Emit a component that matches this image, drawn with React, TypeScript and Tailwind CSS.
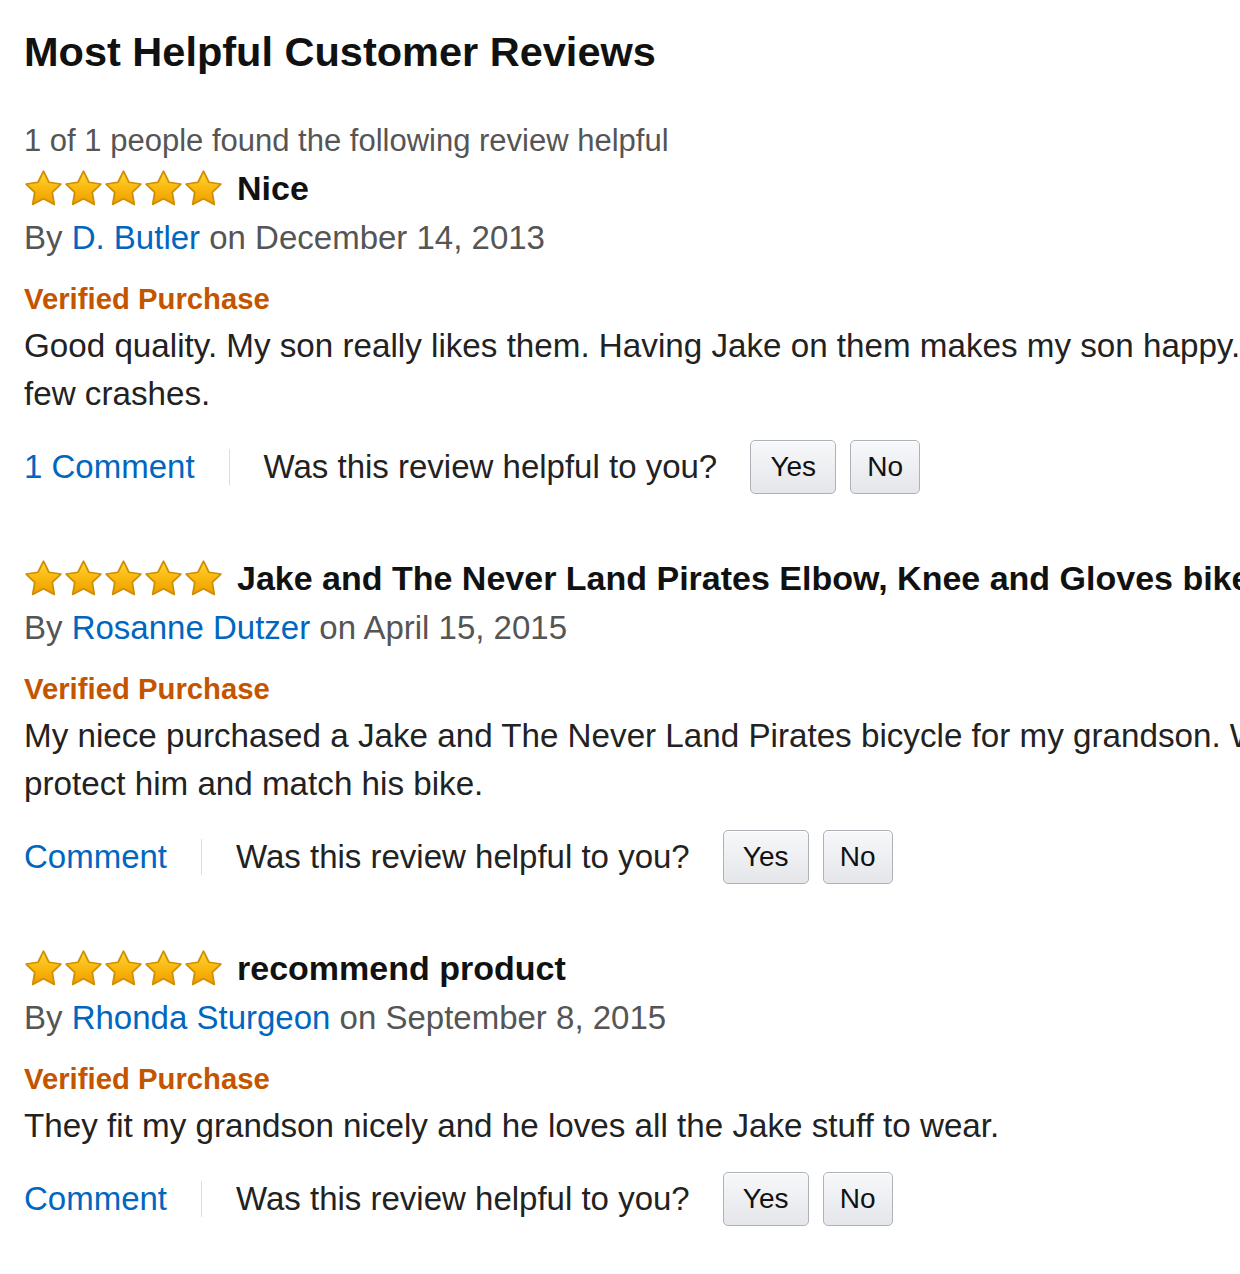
import React from "react";

const Star = ({ id }: { id: string }) => (
  <svg width="39" height="38" viewBox="0 0 40 38" className="shrink-0">
    <defs>
      <linearGradient id={id} x1="0" y1="0" x2="0" y2="1">
        <stop offset="0" stopColor="#ffd43c" />
        <stop offset="0.55" stopColor="#f9b60d" />
        <stop offset="1" stopColor="#ee9d00" />
      </linearGradient>
    </defs>
    <path
      d="M20 1.8 L25.6 13.1 L37.8 14.9 L29 23.6 L31.1 35.8 L20 30 L8.9 35.8 L11 23.6 L2.2 14.9 L14.4 13.1 Z"
      fill={`url(#${id})`}
      stroke="#cf8f00"
      strokeWidth="1.8"
      strokeLinejoin="round"
    />
  </svg>
);

const Stars = ({ k }: { k: string }) => (
  <div className="flex gap-[1px]">
    {[0, 1, 2, 3, 4].map((i) => (
      <Star key={i} id={`g-${k}-${i}`} />
    ))}
  </div>
);

const Btn = ({ label, w }: { label: string; w: string }) => (
  <div
    className={`${w} h-[54px] flex items-center justify-center rounded-[5px] border border-[#adb1b8] bg-gradient-to-b from-[#f7f8fa] to-[#e4e6ea] text-[28px] text-[#111] shadow-[inset_0_1px_0_#fff]`}
  >
    {label}
  </div>
);

type Review = {
  helpful?: string;
  title: string;
  author: string;
  date: string;
  lines: string[];
  comment: string;
  key: string;
};

const reviews: Review[] = [
  {
    key: "a",
    helpful: "1 of 1 people found the following review helpful",
    title: "Nice",
    author: "D. Butler",
    date: "December 14, 2013",
    lines: [
      "Good quality. My son really likes them. Having Jake on them makes my son happy. He has had a",
      "few crashes.",
    ],
    comment: "1 Comment",
  },
  {
    key: "b",
    title: "Jake and The Never Land Pirates Elbow, Knee and Gloves bike pads",
    author: "Rosanne Dutzer",
    date: "April 15, 2015",
    lines: [
      "My niece purchased a Jake and The Never Land Pirates bicycle for my grandson. We bought these to",
      "protect him and match his bike.",
    ],
    comment: "Comment",
  },
  {
    key: "c",
    title: "recommend product",
    author: "Rhonda Sturgeon",
    date: "September 8, 2015",
    lines: ["They fit my grandson nicely and he loves all the Jake stuff to wear."],
    comment: "Comment",
  },
];

export default function App() {
  return (
    <div
      className="w-[1240px] min-h-[1274px] overflow-hidden bg-white pl-[24px] pt-[28px]"
      style={{ fontFamily: '"Liberation Sans", Arial, sans-serif' }}
    >
      <h3 className="text-[41.5px] font-bold leading-[48px] text-[#111] whitespace-nowrap">
        Most Helpful Customer Reviews
      </h3>
      <div className="mt-[45px] flex flex-col gap-[64px]">
        {reviews.map((r) => (
          <div key={r.key} className="flex flex-col whitespace-nowrap">
            {r.helpful && (
              <div className="text-[31px] leading-[40px] text-[#555] mb-[7px]">{r.helpful}</div>
            )}
            <div className="flex items-center gap-[14px] h-[40px]">
              <Stars k={r.key} />
              <span className="text-[34px] font-bold text-[#111]">{r.title}</span>
            </div>
            <div className="mt-[8px] text-[33px] leading-[44px] text-[#555]">
              By <span className="text-[#0066c0]">{r.author}</span> on {r.date}
            </div>
            <div className="mt-[21px] text-[29.3px] font-bold leading-[36px] text-[#c45500]">
              Verified Purchase
            </div>
            <div className="mt-[5px] text-[33.2px] leading-[48px] text-[#222]">
              {r.lines.map((l, i) => (
                <div key={i}>{l}</div>
              ))}
            </div>
            <div className="mt-[22px] flex items-center h-[54px]">
              <span className="text-[33px] text-[#0066c0]">{r.comment}</span>
              <span className="mx-[34px] h-[36px] w-px bg-[#ddd]" />
              <span className="text-[33px] text-[#222]">Was this review helpful to you?</span>
              <div className="ml-[33px] flex gap-[14px]">
                <Btn label="Yes" w="w-[86px]" />
                <Btn label="No" w="w-[70px]" />
              </div>
            </div>
          </div>
        ))}
      </div>
    </div>
  );
}
